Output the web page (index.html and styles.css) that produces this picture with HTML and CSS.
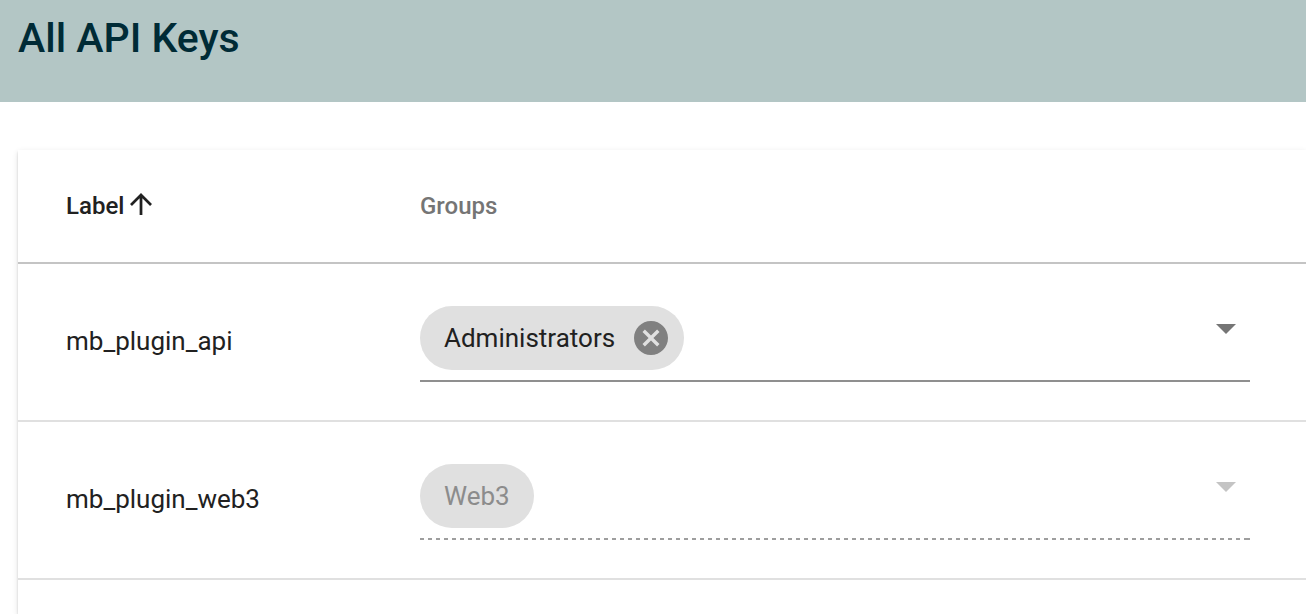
FILE: index.html
```html
<!DOCTYPE html>
<html lang="en">
<head>
  <meta charset="utf-8">
  <meta name="viewport" content="width=device-width, initial-scale=1">
  <title>All API Keys</title>
  <link rel="stylesheet" href="styles.css">
</head>
<body>
  <header class="page-header">
    <h1 class="page-title">All API Keys</h1>
  </header>
  <main class="content">
    <section class="card">
      <table class="keys">
        <thead>
          <tr>
            <th class="label-column" scope="col" aria-sort="ascending">
              <button class="sort" type="button">Label<svg class="sort-icon" viewBox="4 4 16 16" aria-hidden="true"><path d="M4 12l1.41 1.41L11 7.83V20h2V7.83l5.58 5.59L20 12l-8-8-8 8z"/></svg></button>
            </th>
            <th scope="col">Groups</th>
          </tr>
        </thead>
        <tbody>
          <tr>
            <td>mb_plugin_api</td>
            <td>
              <div class="field">
                <span class="chip">Administrators
                  <button class="chip-remove" type="button" aria-label="Remove Administrators"><svg viewBox="2 2 20 20" aria-hidden="true"><path d="M12 2C6.47 2 2 6.47 2 12s4.47 10 10 10 10-4.47 10-10S17.53 2 12 2zm5 13.59L15.59 17 12 13.41 8.41 17 7 15.59 10.59 12 7 8.41 8.41 7 12 10.59 15.59 7 17 8.41 13.41 12 17 15.59z"/></svg></button>
                </span>
                <select class="picker" aria-label="Groups for mb_plugin_api"><option></option></select>
                <svg class="caret" viewBox="0 0 24 24" aria-hidden="true"><path d="M7 10l5 5 5-5z"/></svg>
              </div>
            </td>
          </tr>
          <tr>
            <td>mb_plugin_web3</td>
            <td>
              <div class="field field-disabled">
                <span class="chip">Web3</span>
                <select class="picker" aria-label="Groups for mb_plugin_web3" disabled><option></option></select>
                <svg class="caret" viewBox="0 0 24 24" aria-hidden="true"><path d="M7 10l5 5 5-5z"/></svg>
              </div>
            </td>
          </tr>
        </tbody>
      </table>
    </section>
  </main>
</body>
</html>
```

FILE: styles.css
```css
* {
  box-sizing: border-box;
}

body {
  display: flex;
  flex-direction: column;
  min-height: 100vh;
  margin: 0;
  background: #fff;
  color: #212121;
  font-family: Roboto, "Liberation Sans", sans-serif;
  font-size: 26px;
}

.page-header {
  padding: 14px 18px 40px;
  background: #b3c6c5;
  color: #002b36;
}

.page-title {
  margin: 0;
  font-size: 41px;
  font-weight: 500;
  line-height: 48px;
}

.content {
  display: flex;
  flex: 1;
  padding: 48px 0 0 18px;
}

.card {
  flex: 1;
  min-width: 0;
  background: #fff;
  box-shadow: 0 2px 2px rgba(0, 0, 0, 0.14), 0 2px 6px rgba(0, 0, 0, 0.12);
}

.keys {
  width: 100%;
  border-collapse: separate;
  border-spacing: 0;
  table-layout: fixed;
}

.label-column {
  width: 354px;
}

.keys th {
  height: 114px;
  padding: 0 48px;
  border-bottom: 2px solid #c4c4c4;
  color: #757575;
  font-size: 24px;
  font-weight: 500;
  text-align: left;
}

.keys td {
  padding: 40px 56px 38px 48px;
  border-bottom: 2px solid #e0e0e0;
}

.keys td:first-child {
  padding: 0 0 2px 48px;
}

button {
  padding: 0;
  border: 0;
  background: none;
  color: inherit;
  font: inherit;
  cursor: pointer;
}

svg {
  display: block;
  fill: currentColor;
}

.sort {
  display: flex;
  align-items: flex-start;
  gap: 6px;
  color: #212121;
  line-height: 26px;
}

.sort-icon {
  width: 22px;
  height: 22px;
}

.field {
  position: relative;
  display: flex;
  align-items: flex-start;
  height: 78px;
  padding-top: 2px;
  border-bottom: 2px solid #8f8f8f;
}

.chip {
  display: flex;
  align-items: center;
  gap: 19px;
  height: 64px;
  padding: 0 24px;
  border-radius: 32px;
  background: #e0e0e0;
}

.chip:has(.chip-remove) {
  padding-right: 16px;
}

.chip-remove {
  width: 34px;
  color: #808080;
}

.picker {
  flex: 1;
  min-width: 0;
  height: 64px;
  border: 0;
  background: transparent;
  appearance: none;
}

.caret {
  position: absolute;
  top: 0;
  right: 0;
  width: 48px;
  height: 48px;
  color: #757575;
  pointer-events: none;
}

.field-disabled {
  padding-bottom: 2px;
  border-bottom: 0;
  background:
    linear-gradient(#9e9e9e, #9e9e9e) right bottom / 6px 2px no-repeat,
    repeating-linear-gradient(to right, #9e9e9e 0 4px, transparent 4px 8px) left bottom / 100% 2px no-repeat;
}

.field-disabled .chip {
  color: #8c8c8c;
}

.field-disabled .caret {
  color: #c4c4c4;
}
```
